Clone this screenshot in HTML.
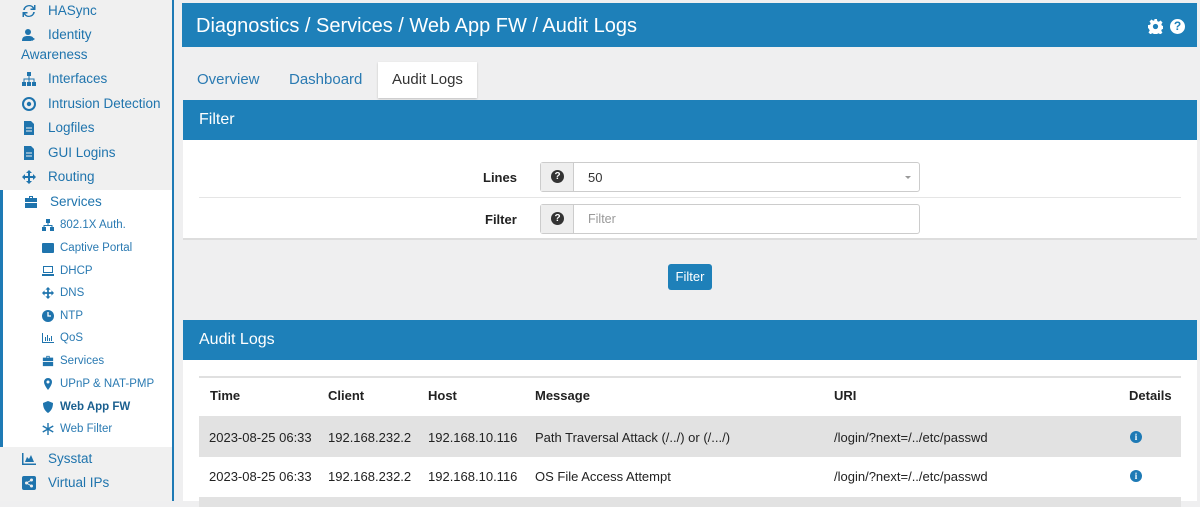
<!DOCTYPE html>
<html><head><meta charset="utf-8"><style>
*{box-sizing:border-box;margin:0;padding:0}
body{width:1200px;height:501px;overflow:hidden;background:#efeff0;font-family:"Liberation Sans",sans-serif;position:relative}
#side{position:absolute;left:0;top:0;width:174px;height:501px;background:#f0f0f0;border-right:2px solid #1e7ab5}
.it{position:absolute;left:22px;font-size:13.5px;color:#1f74ad;display:flex;align-items:center}
.it .ic{width:14px;height:14px;display:inline-block;margin-right:12px;fill:#1f74ad}
#svc{position:absolute;left:0;top:190px;width:172px;height:257px;background:#fff;border-left:3px solid #1e7ab5}
.sub{position:absolute;left:42px;font-size:11.5px;color:#2a7ab2;display:flex;align-items:center}
.sub svg{width:12px;height:12px;margin-right:6px;fill:#1f74ad}
.hdr{position:absolute;background:#1e80b9;color:#fff}
.tab{position:absolute;top:62px;height:36px;font-size:15px;line-height:36px;color:#2a7ab2}
.panel{position:absolute;left:183px;width:1014px;background:#fff}
.lab{position:absolute;font-weight:bold;font-size:13px;color:#222}
.inp{position:absolute;left:540px;width:380px;height:30px;border:1px solid #ccc;border-radius:3px;background:#fff}
.inp .q{position:absolute;left:0;top:0;width:33px;height:28px;background:#eee;border-right:1px solid #ccc}
.inp .q span{position:absolute;left:10px;top:7px;width:13px;height:13px;border-radius:50%;background:#333;color:#fff;font-size:10px;font-weight:bold;text-align:center;line-height:13px}
.inp .t{position:absolute;left:47px;top:7px;font-size:13px}
.th{position:absolute;top:388px;font-weight:bold;font-size:13px;color:#222}
.td{position:absolute;font-size:13px;color:#222}
.info{position:absolute;width:12px;height:12px;border-radius:50%;background:#1e7ab5;color:#fff;font-size:9px;font-weight:bold;text-align:center;line-height:12px;font-family:"Liberation Serif",serif}
</style></head><body>
<div id="side">
<div id="svc"></div>
<div class="it" style="top:3px"><svg class="ic" viewBox="0 0 14 14"><path d="M7 1a6 6 0 0 1 5 2.5V1h1.5v5h-5V4.5h2.3A4.3 4.3 0 0 0 2.8 6H1.1A6 6 0 0 1 7 1zM7 13a6 6 0 0 1-5-2.5V13H.5V8h5v1.5H3.2A4.3 4.3 0 0 0 11.2 8h1.7A6 6 0 0 1 7 13z"/></svg>HASync</div>
<div class="it" style="top:27px"><svg class="ic" viewBox="0 0 14 14"><circle cx="6" cy="4" r="3"/><path d="M0 13c0-4 2-5 6-5s5 1 5 2l-2 3z"/><path d="M10 9l3 2-3 2-2-2z"/></svg>Identity</div>
<div style="position:absolute;left:21px;top:47px;font-size:13.5px;color:#1f74ad">Awareness</div>
<div class="it" style="top:71px"><svg class="ic" viewBox="0 0 14 14"><rect x="5" y="0" width="4" height="4"/><rect x="0" y="10" width="4" height="4"/><rect x="5" y="10" width="4" height="4"/><rect x="10" y="10" width="4" height="4"/><path d="M6.5 4h1v2.5H12.5V10h-1V7.5h-4V10h-1V7.5h-4V10h-1V6.5h5z"/></svg>Interfaces</div>
<div class="it" style="top:96px"><svg class="ic" viewBox="0 0 14 14"><circle cx="7" cy="7" r="6" fill="none" stroke="#1f74ad" stroke-width="2"/><circle cx="7" cy="7" r="2.2"/></svg>Intrusion Detection</div>
<div class="it" style="top:120px"><svg class="ic" viewBox="0 0 14 14"><path d="M2 0h7l3 3v11H2z"/><path d="M4 7h6M4 10h6" stroke="#f0f0f0" stroke-width="1"/></svg>Logfiles</div>
<div class="it" style="top:145px"><svg class="ic" viewBox="0 0 14 14"><path d="M2 0h7l3 3v11H2z"/><path d="M4 7h6M4 10h6" stroke="#f0f0f0" stroke-width="1"/></svg>GUI Logins</div>
<div class="it" style="top:169px"><svg class="ic" viewBox="0 0 14 14"><path d="M7 0l3 3H8v3h3V4l3 3-3 3V8H8v3h2l-3 3-3-3h2V8H3v2L0 7l3-3v2h3V3H4z"/></svg>Routing</div>
<div class="it" style="top:194px;left:24px"><svg class="ic" viewBox="0 0 14 14"><path d="M5 1h4v2h4v4H1V3h4zM6 2v1h2V2zM1 8h12v5H1z"/></svg>Services</div>
<div class="sub" style="top:219px"><svg viewBox="0 0 12 12"><rect x="4" y="0" width="4" height="4"/><rect x="0" y="8" width="4" height="4"/><rect x="8" y="8" width="4" height="4"/><path d="M5.5 4h1v2H10.5v2h-1V7h-7v1h-1V6h4z"/></svg>802.1X Auth.</div>
<div class="sub" style="top:242px"><svg viewBox="0 0 12 12"><rect x="0" y="1" width="12" height="10" rx="1"/></svg>Captive Portal</div>
<div class="sub" style="top:265px"><svg viewBox="0 0 12 12"><path d="M1 1h10v7H1zM2 2v5h8V2zM0 9h12v2H0z"/></svg>DHCP</div>
<div class="sub" style="top:287px"><svg viewBox="0 0 14 14"><path d="M7 0l3 3H8v3h3V4l3 3-3 3V8H8v3h2l-3 3-3-3h2V8H3v2L0 7l3-3v2h3V3H4z"/></svg>DNS</div>
<div class="sub" style="top:310px"><svg viewBox="0 0 12 12"><circle cx="6" cy="6" r="6"/><path d="M6 2v4h3" stroke="#fff" stroke-width="1.3" fill="none"/></svg>NTP</div>
<div class="sub" style="top:332px"><svg viewBox="0 0 12 12"><path d="M0 1h1v9h11v1H0zM3 5h1v4H3zM5 3h1v6H5zM7 6h1v3H7zM9 4h1v5H9z"/></svg>QoS</div>
<div class="sub" style="top:355px"><svg viewBox="0 0 14 14"><path d="M5 1h4v2h4v4H1V3h4zM6 2v1h2V2zM1 8h12v5H1z"/></svg>Services</div>
<div class="sub" style="top:378px"><svg viewBox="0 0 12 12"><path d="M6 0a4 4 0 0 1 4 4c0 3-4 8-4 8S2 7 2 4a4 4 0 0 1 4-4zm0 2.5a1.5 1.5 0 1 0 0 3 1.5 1.5 0 0 0 0-3z"/></svg>UPnP &amp; NAT-PMP</div>
<div class="sub" style="top:401px;font-weight:bold;color:#1a5f8f"><svg viewBox="0 0 12 12"><path d="M6 0l5 2c0 5-2 8-5 10C3 10 1 7 1 2z"/></svg>Web App FW</div>
<div class="sub" style="top:423px"><svg viewBox="0 0 12 12"><path d="M5.3 0h1.4v4.8l4.2-2.4.7 1.2L7.4 6l4.2 2.4-.7 1.2-4.2-2.4V12H5.3V7.2L1.1 9.6.4 8.4 4.6 6 .4 3.6l.7-1.2 4.2 2.4z"/></svg>Web Filter</div>
<div class="it" style="top:451px"><svg class="ic" viewBox="0 0 14 14"><path d="M0 1h1.5v10.5H14V13H0zM3 10l2-5 2 2 2-4 3 7z"/></svg>Sysstat</div>
<div class="it" style="top:475px"><svg class="ic" viewBox="0 0 14 14"><rect width="14" height="14" rx="2"/><circle cx="9.5" cy="4" r="1.5" fill="#f0f0f0"/><circle cx="4.5" cy="7" r="1.5" fill="#f0f0f0"/><circle cx="9.5" cy="10" r="1.5" fill="#f0f0f0"/><path d="M9.5 4L4.5 7l5 3" stroke="#f0f0f0" fill="none"/></svg>Virtual IPs</div>
</div>

<div class="hdr" style="left:182px;top:3px;width:1015px;height:44px"><div style="position:absolute;left:14px;top:12px;font-size:20px">Diagnostics / Services / Web App FW / Audit Logs</div>
<svg style="position:absolute;left:966px;top:16px" width="15" height="15" viewBox="0 0 16 16"><path fill="#fff" d="M6.5 0h3l.4 2.2 1.6.7 1.9-1.3 2.1 2.1-1.3 1.9.7 1.6 2.1.3v3l-2.2.4-.7 1.6 1.3 1.9-2.1 2.1-1.9-1.3-1.6.7-.3 2.1h-3l-.4-2.2-1.6-.7-1.9 1.3-2.1-2.1 1.3-1.9-.7-1.6L0 9.5v-3l2.2-.4.7-1.6-1.3-1.9 2.1-2.1 1.9 1.3 1.6-.7zM8 5.2a2.8 2.8 0 1 0 0 5.6 2.8 2.8 0 0 0 0-5.6z"/></svg>
<div style="position:absolute;left:988px;top:16px;width:15px;height:15px;border-radius:50%;background:#fff;color:#1e80b9;font-size:12px;font-weight:bold;text-align:center;line-height:15px">?</div>
</div>

<div class="tab" style="left:197px">Overview</div>
<div class="tab" style="left:289px">Dashboard</div>
<div class="tab" style="left:378px;width:99px;background:#fff;color:#333;text-align:center;box-shadow:0 1px 2px rgba(0,0,0,.2)">Audit Logs</div>

<div class="hdr" style="left:183px;top:100px;width:1014px;height:40px"><div style="position:absolute;left:16px;top:11px;font-size:16px">Filter</div></div>
<div class="panel" style="top:140px;height:100px;border-bottom:2px solid #ddd">
<div style="position:absolute;left:16px;right:16px;top:57px;border-top:1px solid #e5e5e5"></div>
</div>
<div class="lab" style="left:483px;top:170px">Lines</div>
<div class="inp" style="top:162px"><div class="q"><span>?</span></div><div class="t" style="color:#333">50</div><div style="position:absolute;right:8px;top:13px;border:3px solid transparent;border-top:3px solid #999"></div></div>
<div class="lab" style="left:485px;top:212px">Filter</div>
<div class="inp" style="top:204px"><div class="q"><span>?</span></div><div class="t" style="color:#999;font-size:12.5px">Filter</div></div>
<div style="position:absolute;left:668px;top:264px;width:44px;height:26px;background:#1e80b9;border-radius:3px;color:#fff;font-size:13px;text-align:center;line-height:26px">Filter</div>

<div class="hdr" style="left:183px;top:320px;width:1014px;height:40px"><div style="position:absolute;left:16px;top:11px;font-size:16px">Audit Logs</div></div>
<div class="panel" style="top:360px;height:141px">
<div style="position:absolute;left:16px;right:16px;top:16px;border-top:2px solid #e0e0e0"></div>
<div style="position:absolute;left:16px;right:16px;top:56px;height:41px;background:#e2e2e2"></div>
<div style="position:absolute;left:16px;right:16px;top:137px;height:10px;background:#e2e2e2"></div>
</div>
<div class="th" style="left:210px">Time</div><div class="th" style="left:328px">Client</div><div class="th" style="left:428px">Host</div><div class="th" style="left:535px">Message</div><div class="th" style="left:834px">URI</div><div class="th" style="left:1129px">Details</div>
<div class="td" style="left:209px;top:430px">2023-08-25 06:33</div><div class="td" style="left:328px;top:430px">192.168.232.2</div><div class="td" style="left:428px;top:430px">192.168.10.116</div><div class="td" style="left:535px;top:430px">Path Traversal Attack (/../) or (/.../)</div><div class="td" style="left:834px;top:430px">/login/?next=/../etc/passwd</div><div class="info" style="left:1130px;top:431px">i</div>
<div class="td" style="left:209px;top:469px">2023-08-25 06:33</div><div class="td" style="left:328px;top:469px">192.168.232.2</div><div class="td" style="left:428px;top:469px">192.168.10.116</div><div class="td" style="left:535px;top:469px">OS File Access Attempt</div><div class="td" style="left:834px;top:469px">/login/?next=/../etc/passwd</div><div class="info" style="left:1130px;top:470px">i</div>
</body></html>
